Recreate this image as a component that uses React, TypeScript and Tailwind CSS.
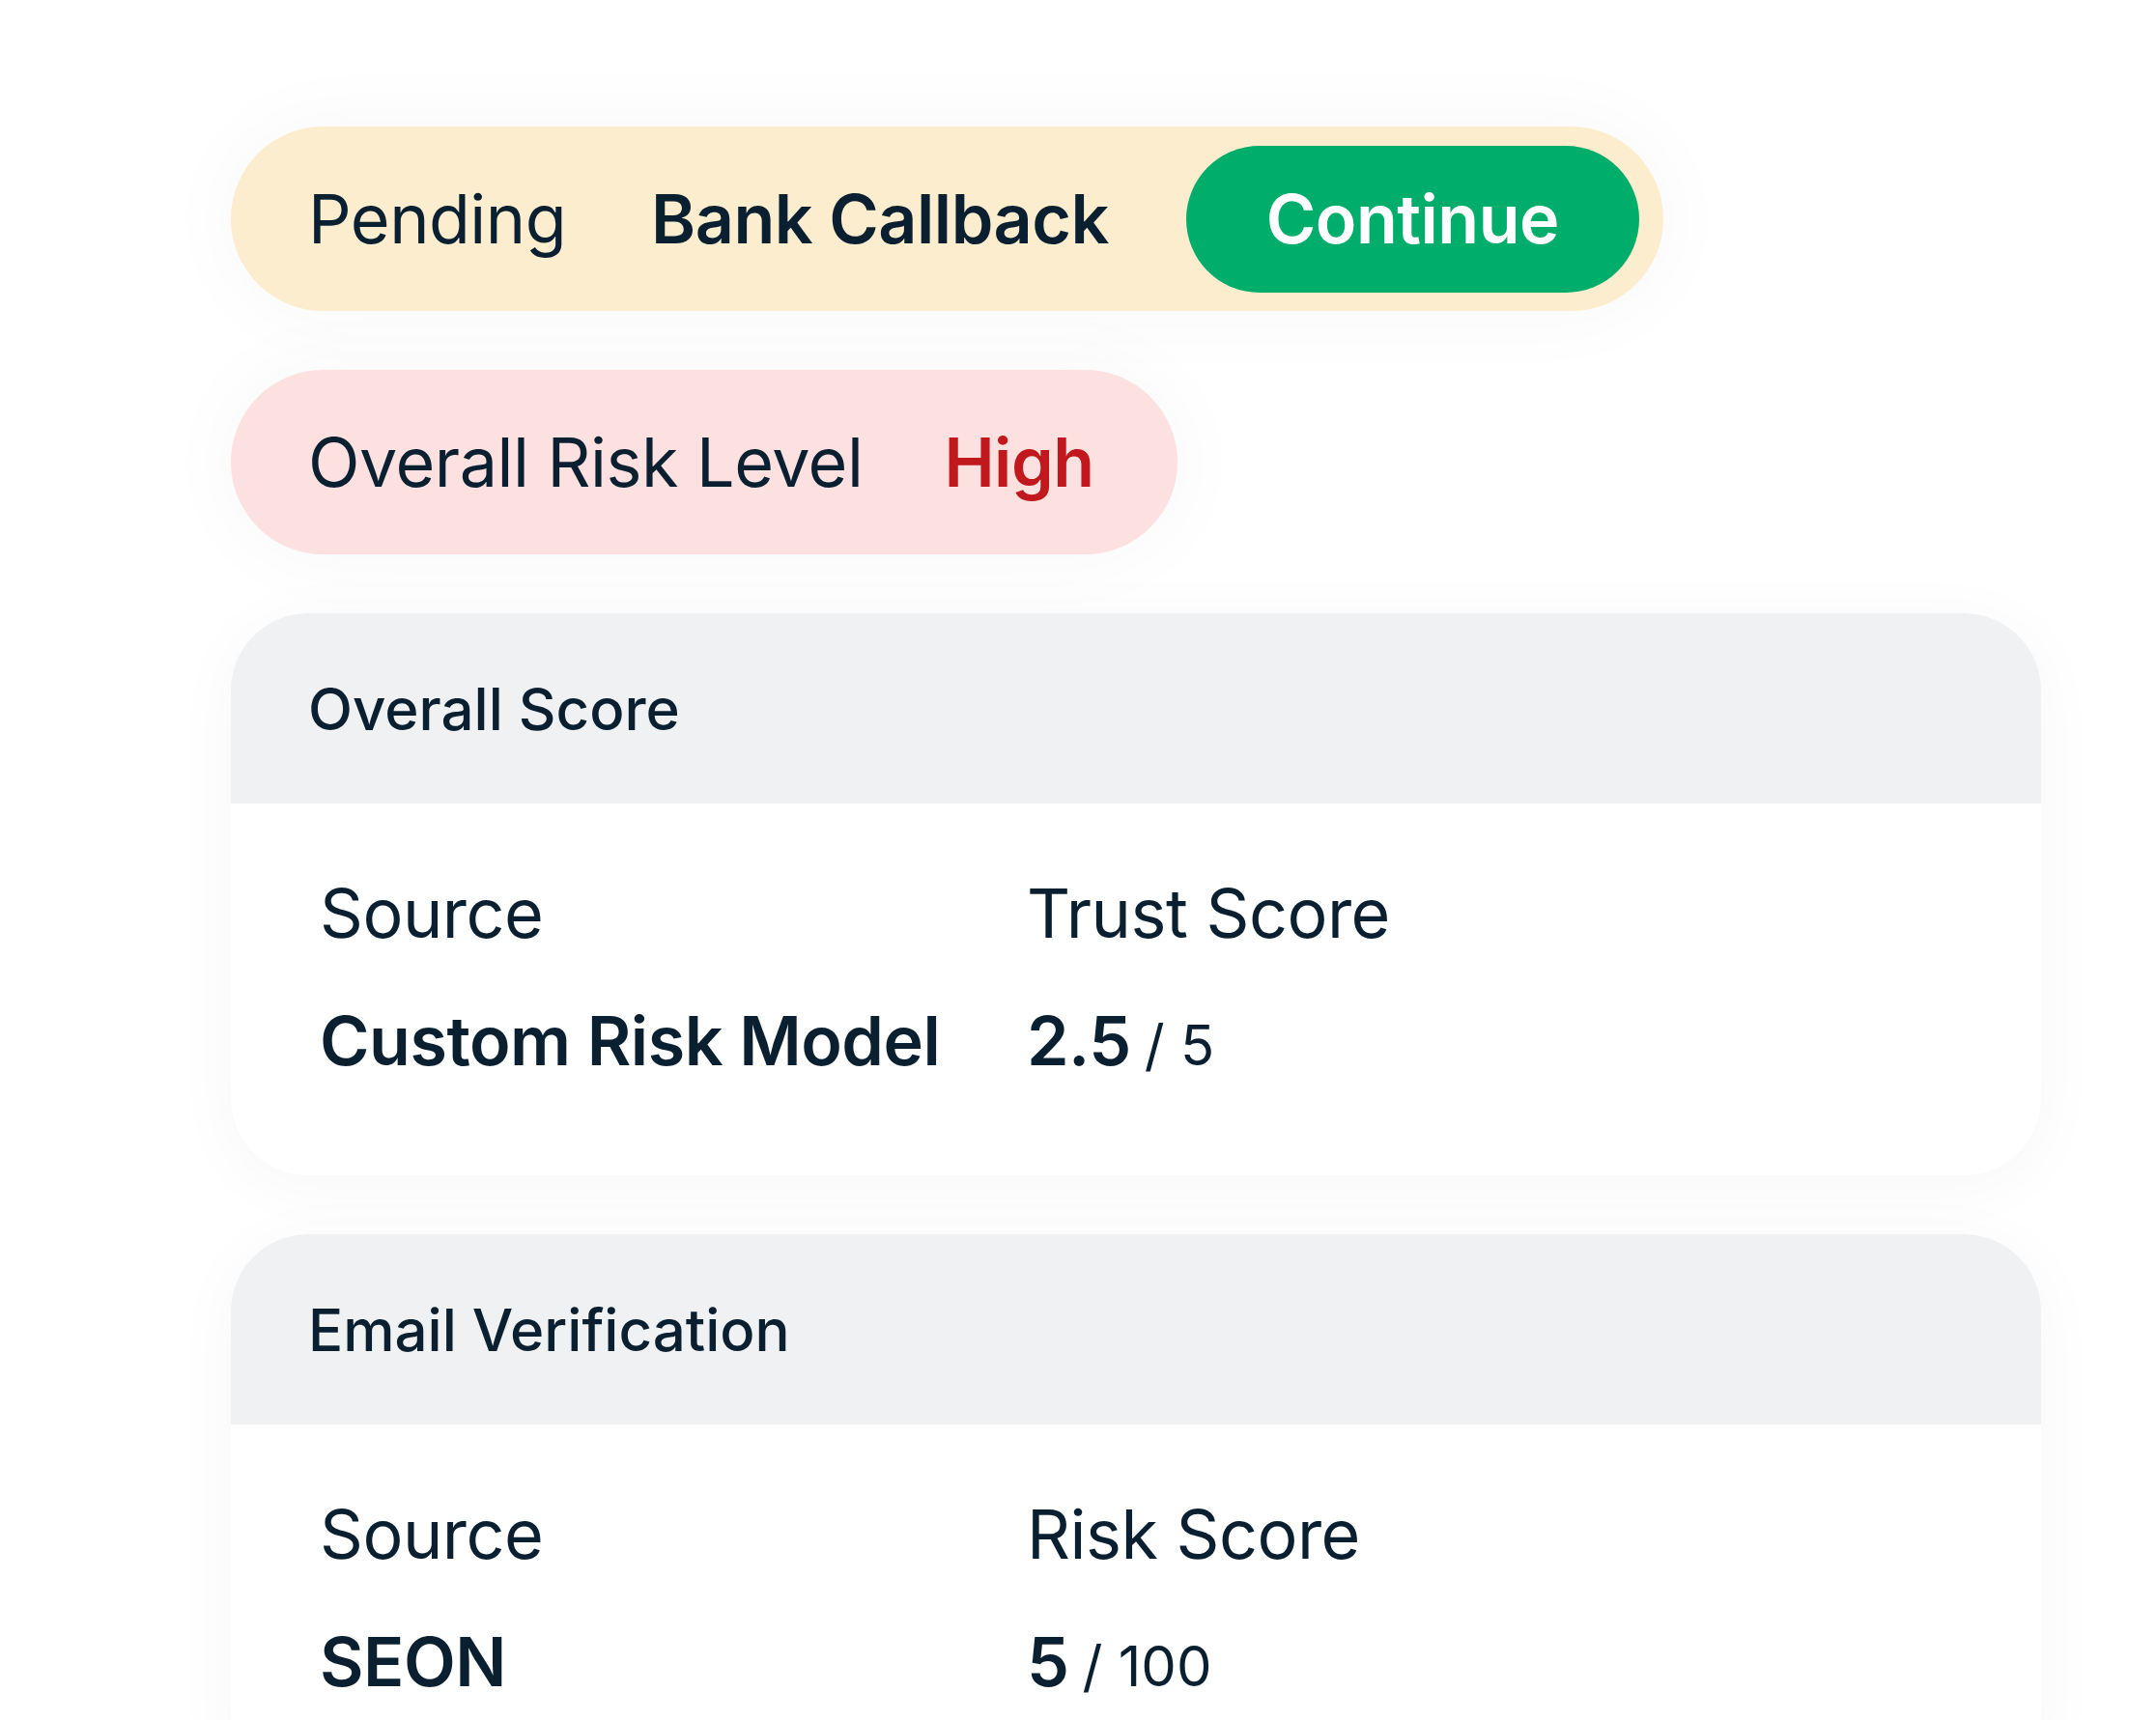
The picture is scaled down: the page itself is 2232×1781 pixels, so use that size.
import React from 'react';

const ink = 'text-[#0a2031]';

function ScoreCard({
  title,
  label,
  source,
  value,
  max,
}: {
  title: string;
  label: string;
  source: string;
  value: string;
  max: string;
}) {
  return (
    <div className="w-[1874px] rounded-[80px] overflow-hidden bg-white shadow-[0_10px_70px_rgba(0,0,0,0.035)]">
      <div className="h-[197px] bg-[#f0f1f3] pl-[80px] flex items-center">
        <span className={`text-[60px] leading-[72px] font-medium ${ink}`}>{title}</span>
      </div>
      <div className="pl-[92px] pt-[71px] pb-[92px] grid grid-cols-[732px_1fr] gap-y-[47px] text-[70px] leading-[85px] tracking-[-0.5px]">
        <span className={ink}>Source</span>
        <span className={ink}>{label}</span>
        <span className={`font-semibold ${ink}`}>{source}</span>
        <span className={ink}>
          <span className="font-semibold">{value}</span>
          <span className="text-[58px] ml-[14px] tracking-normal">/ {max}</span>
        </span>
      </div>
    </div>
  );
}

export default function App() {
  return (
    <div className="min-h-screen w-full bg-white" style={{ fontFamily: 'Inter, "Noto Sans", sans-serif' }}>
      <div className="ml-[239px] pt-[131px] flex flex-col items-start gap-[61px]">
        <div className="h-[191px] rounded-full bg-[#fdedcf] pl-[80px] pr-[25px] flex items-center tracking-[-0.5px] shadow-[0_0_90px_rgba(0,0,0,0.035)]">
          <span className={`text-[70px] ${ink}`}>Pending</span>
          <span className={`text-[70px] font-semibold ml-[88px] ${ink}`}>Bank Callback</span>
          <button className="ml-[80px] h-[152px] w-[469px] rounded-full bg-[#00ad6a] text-white text-[70px] font-semibold flex items-center justify-center">
            Continue
          </button>
        </div>

        <div className="h-[191px] rounded-full bg-[#fde0e0] pl-[80px] pr-[86px] flex items-center tracking-[-0.5px] shadow-[0_0_90px_rgba(0,0,0,0.035)]">
          <span className={`text-[70px] ${ink}`}>Overall Risk Level</span>
          <span className="text-[70px] font-semibold ml-[84px] text-[#c0181c]">High</span>
        </div>

        <ScoreCard title="Overall Score" label="Trust Score" source="Custom Risk Model" value="2.5" max="5" />
        <ScoreCard title="Email Verification" label="Risk Score" source="SEON" value="5" max="100" />
      </div>
    </div>
  );
}
